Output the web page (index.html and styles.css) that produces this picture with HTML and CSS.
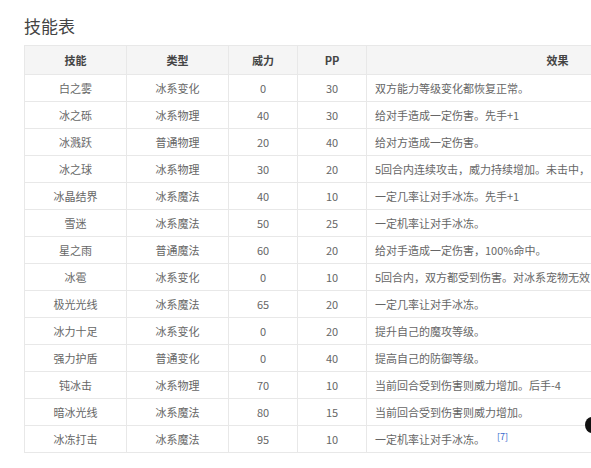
FILE: index.html
```html
<!DOCTYPE html>
<html lang="zh-CN">
<head>
<meta charset="utf-8">
<link rel="stylesheet" href="styles.css">
</head>
<body>
<div class="page">
  <h2 class="title">技能表</h2>
  <table class="skills">
    <colgroup>
      <col class="c-name"><col class="c-type"><col class="c-pow"><col class="c-pp"><col class="c-eff">
    </colgroup>
    <thead>
      <tr><th>技能</th><th>类型</th><th>威力</th><th>PP</th><th>效果</th></tr>
    </thead>
    <tbody>
      <tr><td>白之雾</td><td>冰系变化</td><td>0</td><td>30</td><td class="eff">双方能力等级变化都恢复正常。</td></tr>
      <tr><td>冰之砾</td><td>冰系物理</td><td>40</td><td>30</td><td class="eff">给对手造成一定伤害。先手+1</td></tr>
      <tr><td>冰溅跃</td><td>普通物理</td><td>20</td><td>40</td><td class="eff">给对方造成一定伤害。</td></tr>
      <tr><td>冰之球</td><td>冰系物理</td><td>30</td><td>20</td><td class="eff">5回合内连续攻击，威力持续增加。未击中，</td></tr>
      <tr><td>冰晶结界</td><td>冰系魔法</td><td>40</td><td>10</td><td class="eff">一定几率让对手冰冻。先手+1</td></tr>
      <tr><td>雪迷</td><td>冰系魔法</td><td>50</td><td>25</td><td class="eff">一定机率让对手冰冻。</td></tr>
      <tr><td>星之雨</td><td>普通魔法</td><td>60</td><td>20</td><td class="eff">给对手造成一定伤害，100%命中。</td></tr>
      <tr><td>冰雹</td><td>冰系变化</td><td>0</td><td>10</td><td class="eff">5回合内，双方都受到伤害。对冰系宠物无效</td></tr>
      <tr><td>极光光线</td><td>冰系魔法</td><td>65</td><td>20</td><td class="eff">一定几率让对手冰冻。</td></tr>
      <tr><td>冰力十足</td><td>冰系变化</td><td>0</td><td>20</td><td class="eff">提升自己的魔攻等级。</td></tr>
      <tr><td>强力护盾</td><td>普通变化</td><td>0</td><td>40</td><td class="eff">提高自己的防御等级。</td></tr>
      <tr><td>钝冰击</td><td>冰系物理</td><td>70</td><td>10</td><td class="eff">当前回合受到伤害则威力增加。后手-4</td></tr>
      <tr><td>暗冰光线</td><td>冰系魔法</td><td>80</td><td>15</td><td class="eff">当前回合受到伤害则威力增加。</td></tr>
      <tr><td>冰冻打击</td><td>冰系魔法</td><td>95</td><td>10</td><td class="eff">一定机率让对手冰冻。<sup class="ref">[7]</sup></td></tr>
    </tbody>
  </table>
  <span class="blob"></span>
</div>
</body>
</html>
```
FILE: styles.css
```css
html, body {
  margin: 0;
  padding: 0;
  background: #ffffff;
  overflow: hidden;
  width: 591px;
  height: 468px;
}
.page {
  position: relative;
  padding: 0 0 0 24px;
  font-family: "Noto Sans CJK SC", "Liberation Sans", sans-serif;
  color: #666;
}
.title {
  margin: 0;
  padding-top: 15px;
  height: 30px;
  font-size: 17px;
  line-height: 22px;
  font-weight: normal;
  color: #444;
}
.skills {
  border-collapse: collapse;
  table-layout: fixed;
  width: 724px;
  font-size: 11px;
}
.c-name { width: 102px; }
.c-type { width: 102px; }
.c-pow { width: 69px; }
.c-pp { width: 69px; }
.c-eff { width: 382px; }
.skills th, .skills td {
  border: 1px solid #e8e8e8;
  text-align: center;
  padding: 0 8px;
  white-space: nowrap;
  overflow: hidden;
}
.skills th {
  height: 28px;
  background: #f5f5f5;
  color: #444;
  font-weight: bold;
}
.skills td {
  height: 26px;
  color: #666;
}
.skills td.eff {
  text-align: left;
}
.ref {
  color: #3366cc;
  font-size: 9px;
  margin-left: 12px;
  vertical-align: 4px;
  line-height: 0;
}
.blob {
  position: absolute;
  left: 585px;
  top: 417px;
  width: 14px;
  height: 16px;
  border-radius: 50%;
  background: #111;
}
```
